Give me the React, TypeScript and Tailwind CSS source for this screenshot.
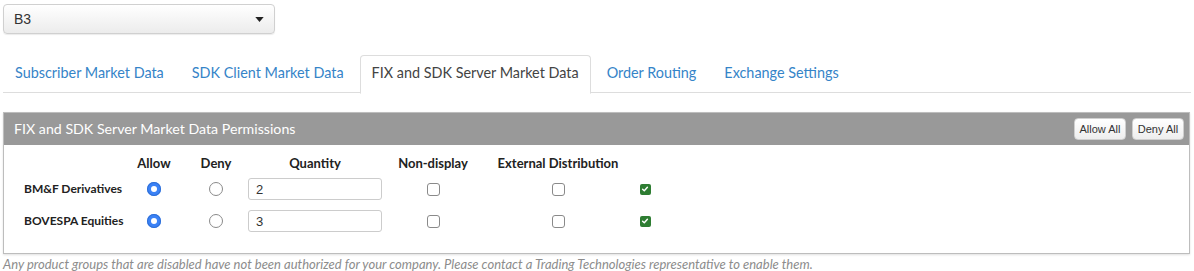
import { useState } from "react";

const tabs = [
  "Subscriber Market Data",
  "SDK Client Market Data",
  "FIX and SDK Server Market Data",
  "Order Routing",
  "Exchange Settings",
];

const rows = [
  { name: "BM&F Derivatives", qty: "2" },
  { name: "BOVESPA Equities", qty: "3" },
];

const cols = "grid grid-cols-[100px_60px_64px_134px_102px_148px_26px] items-center";

function Radio({ checked }: { checked: boolean }) {
  return checked ? (
    <span className="flex h-[14px] w-[14px] items-center justify-center rounded-full bg-[#3b82f6] shadow-[inset_0_0_0_1px_#2f6fd6]">
      <span className="h-[6px] w-[6px] rounded-full bg-white" />
    </span>
  ) : (
    <span className="h-[14px] w-[14px] rounded-full border border-[#8a8a8a] bg-white" />
  );
}

function Box() {
  return <span className="h-[13px] w-[13px] rounded-[3px] border border-[#8a8a8a] bg-white" />;
}

function GreenCheck() {
  return (
    <span className="flex h-[11px] w-[11px] items-center justify-center rounded-[2px] bg-[#2e7d32]">
      <svg viewBox="0 0 10 10" className="h-[8px] w-[8px]">
        <path d="M2 5.2 L4.1 7.2 L8 2.8" fill="none" stroke="white" strokeWidth="1.8" strokeLinecap="round" strokeLinejoin="round" />
      </svg>
    </span>
  );
}

export default function App() {
  const [active, setActive] = useState(2);

  return (
    <div className="w-[1194px] h-[271px] bg-white px-[3px] pt-[4px] font-['Lato',sans-serif] overflow-hidden">
      <div className="flex h-[30px] w-[272px] items-center justify-between rounded-[4px] border border-[#d0d0d0] bg-gradient-to-b from-white to-[#ececec] pl-[10px] pr-[10px] shadow-[0_1px_1px_rgba(0,0,0,0.08)] font-['Liberation_Sans',sans-serif] text-[14px] text-[#333]">
        <span>B3</span>
        <svg viewBox="0 0 10 6" className="h-[5px] w-[9px]">
          <path d="M0 0 L10 0 L5 6 Z" fill="#222" />
        </svg>
      </div>

      <div className="mt-[21px] flex h-[38px] gap-[4px] border-b border-[#dddddd]">
        {tabs.map((t, i) => (
          <button
            key={t}
            onClick={() => setActive(i)}
            className={
              i === active
                ? "-mb-px flex h-[39px] items-center rounded-t-[4px] border border-b-white border-[#dddddd] bg-white px-[11px] pb-[3px] text-[14.4px] text-[#444]"
                : "flex h-[38px] items-center px-[12px] pb-[3px] text-[14.4px] text-[#3584c8]"
            }
          >
            {t}
          </button>
        ))}
      </div>

      <div className="mt-[19px] h-[142px] w-[1187px] border border-[#bdbdbd] shadow-[0_1px_2px_rgba(0,0,0,0.12)]">
        <div className="flex h-[32px] items-center justify-between bg-[#999999] pl-[10px] pr-[5px]">
          <span className="pb-[1px] text-[14.2px] text-white">FIX and SDK Server Market Data Permissions</span>
          <div className="flex gap-[6px] font-['Liberation_Sans',sans-serif] text-[11px] text-[#333]">
            <button className="h-[22px] w-[52px] rounded-[4px] border border-[#cfcfcf] bg-gradient-to-b from-white to-[#eeeeee]">Allow All</button>
            <button className="h-[22px] w-[52px] rounded-[4px] border border-[#cfcfcf] bg-gradient-to-b from-white to-[#eeeeee]">Deny All</button>
          </div>
        </div>

        <div className="pl-[20px] pt-[9px] text-[#222]">
          <div className={`${cols} h-[19px] text-[13px] font-bold text-center`}>
            <span />
            <span>Allow</span>
            <span>Deny</span>
            <span>Quantity</span>
            <span>Non-display</span>
            <span>External Distribution</span>
            <span />
          </div>
          {rows.map((r) => (
            <div key={r.name} className={`${cols} h-[32px]`}>
              <span className="text-[12px] font-bold">{r.name}</span>
              <span className="flex justify-center"><Radio checked /></span>
              <span className="flex justify-center"><Radio checked={false} /></span>
              <span className="flex">
                <input
                  defaultValue={r.qty}
                  className="h-[22px] w-[134px] rounded-[3px] border border-[#cccccc] px-[7px] font-['Liberation_Sans',sans-serif] text-[13px] text-[#333] outline-none"
                />
              </span>
              <span className="flex justify-center"><Box /></span>
              <span className="flex justify-center"><Box /></span>
              <span className="flex justify-center"><GreenCheck /></span>
            </div>
          ))}
        </div>
      </div>

      <p className="mt-[2px] text-[13px] leading-[16px] italic text-[#8c8c8c]">
        Any product groups that are disabled have not been authorized for your company. Please contact a Trading Technologies representative to enable them.
      </p>
    </div>
  );
}
